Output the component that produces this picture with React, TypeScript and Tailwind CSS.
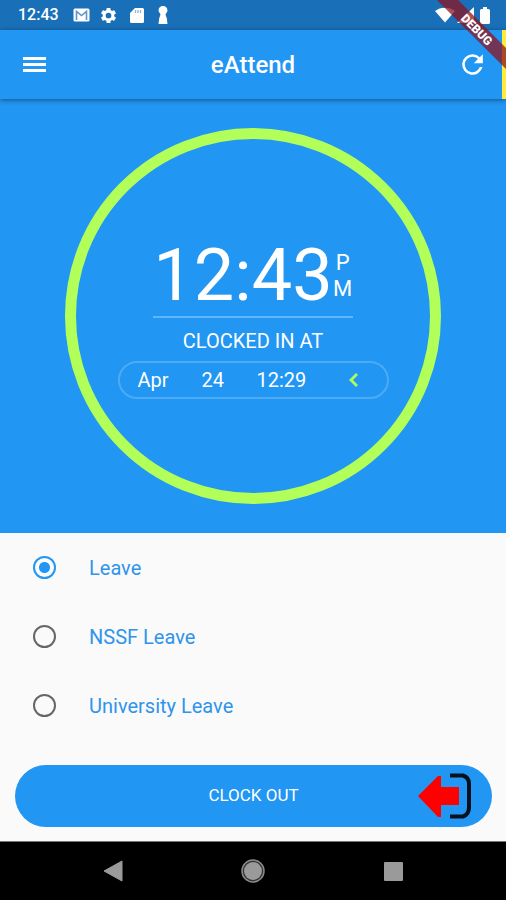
import { useState } from "react";

function StatusBar() {
  return (
    <div className="flex h-[30px] items-center justify-between bg-[#1a70b8] pr-4 pl-[18px] text-white">
      <div className="flex items-center">
        <span className="w-[55px] text-base leading-5 font-medium">12:43</span>
        <svg width="17" height="14" viewBox="0 0 17 14" aria-hidden="true">
          <rect x="0.5" y="0.5" width="16" height="13" rx="1.5" fill="#fff" />
          <path d="M3.5 12V3.5l5 4 5-4V12" fill="none" stroke="#5f95c8" strokeWidth="1.6" />
        </svg>
        <svg className="ml-[9px]" width="19" height="19" viewBox="0 0 24 24" fill="#fff" aria-hidden="true">
          <path d="M19.14 12.94c.04-.3.06-.61.06-.94 0-.32-.02-.64-.07-.94l2.03-1.58a.49.49 0 0 0 .12-.61l-1.92-3.32a.49.49 0 0 0-.59-.22l-2.39.96c-.5-.38-1.03-.7-1.62-.94l-.36-2.54a.48.48 0 0 0-.48-.41h-3.84a.48.48 0 0 0-.47.41l-.36 2.54c-.59.24-1.13.57-1.62.94l-2.39-.96a.48.48 0 0 0-.59.22L2.74 8.87a.48.48 0 0 0 .12.61l2.03 1.58c-.05.3-.09.63-.09.94s.02.64.07.94l-2.03 1.58a.49.49 0 0 0-.12.61l1.92 3.32c.12.22.37.29.59.22l2.39-.96c.5.38 1.03.7 1.62.94l.36 2.54c.05.24.24.41.48.41h3.84c.24 0 .44-.17.47-.41l.36-2.54c.59-.24 1.13-.56 1.62-.94l2.39.96c.22.08.47 0 .59-.22l1.92-3.32a.48.48 0 0 0-.12-.61l-2.01-1.58zM12 15.6A3.6 3.6 0 1 1 12 8.4a3.6 3.6 0 0 1 0 7.2z" />
        </svg>
        <svg className="ml-3" width="14" height="17" viewBox="0 0 14 17" aria-hidden="true">
          <path d="M5 1h7.500A1.500 1.500 0 0 1 14 2.500V14.500A1.500 1.500 0 0 1 12.500 16h-11A1.500 1.500 0 0 1 0 14.500V6z" fill="#fff" />
          <path d="M5.500 3v3M8 3v3M10.500 3v3" stroke="#8db6d8" strokeWidth="1.300" />
        </svg>
        <svg className="ml-[13px]" width="12" height="18" viewBox="0 0 12 18" fill="#fff" aria-hidden="true">
          <path d="M4.500 0h3L10 2l.5 3L8.500 8.500 10 13v1l.5 4h-9L2 14v-1l1.500-4.500L1.500 5 2 2z" />
        </svg>
      </div>
      <div className="flex items-center">
        <svg width="20" height="16" viewBox="0 0 20 16" fill="#fff" aria-hidden="true">
          <path d="M0 4C5-.5 15-.5 20 4L10 15.500z" />
        </svg>
        <svg className="ml-0.5" width="17" height="16" viewBox="0 0 17 16" fill="#fff" aria-hidden="true">
          <path d="M17 0v16H0z" />
        </svg>
        <svg className="ml-[6px]" width="10" height="17" viewBox="0 0 10 17" fill="#fff" aria-hidden="true">
          <path d="M3 0h4v2h1.500A1.500 1.500 0 0 1 10 3.500v12A1.500 1.500 0 0 1 8.500 17h-7A1.500 1.500 0 0 1 0 15.500v-12A1.500 1.500 0 0 1 1.500 2H3z" />
        </svg>
      </div>
    </div>
  );
}

function AppBar() {
  return (
    <header className="relative flex h-[69px] items-center justify-between border-r-4 border-[#ffeb3b] bg-[#2196f3] pr-[15px] pl-[23px] text-white shadow-[0_1px_5px_rgba(0,0,0,0.45)]">
      <button type="button" aria-label="Menu" className="flex size-6 items-center justify-center">
        <svg width="24" height="18" viewBox="0 0 24 18" fill="#fff" aria-hidden="true">
          <path d="M0 1h23v3H0zM0 7h23v3H0zM0 13h23v3H0z" />
        </svg>
      </button>
      <h1 className="text-2xl font-medium">eAttend</h1>
      <button type="button" aria-label="Refresh" className="flex size-7 items-center justify-center">
        <svg className="shrink-0" width="31" height="31" viewBox="0 0 24 24" fill="#fff" aria-hidden="true">
          <path d="M17.650 6.350A7.960 7.960 0 0 0 12 4a8 8 0 1 0 7.730 10h-2.080A6 6 0 1 1 12 6c1.660 0 3.140.69 4.220 1.780L13 11h7V4z" />
        </svg>
      </button>
    </header>
  );
}

function ClockPanel() {
  return (
    <section className="flex justify-center bg-[#2196f3] pt-[29px] pb-[29px] text-white">
      <div className="flex size-[376px] flex-col items-center rounded-full border-[11px] border-[#b2ff59] pt-[99px]">
        <div className="flex items-center border-b-2 border-white/30 pb-0.5">
          <time className="text-[72px] leading-[76px]">12:43</time>
          <span className="flex w-5 flex-col items-center text-[22px] leading-[26px]">
            <span>P</span>
            <span>M</span>
          </span>
        </div>
        <p className="mt-[11px] text-xl leading-6">CLOCKED IN AT</p>
        <div className="mt-2 flex h-[38px] w-[271px] items-center rounded-full border-2 border-white/20 pr-7 pl-[18px] text-xl leading-6">
          <span className="w-16">Apr</span>
          <span className="w-[55px]">24</span>
          <span>12:29</span>
          <svg className="ml-auto" width="12" height="16" viewBox="0 0 12 16" aria-hidden="true">
            <path d="M10 2L4 8l6 6" fill="none" stroke="#b2ff59" strokeWidth="2.800" />
          </svg>
        </div>
      </div>
    </section>
  );
}

const leaveTypes = ["Leave", "NSSF Leave", "University Leave"];

function LeaveOptions() {
  const [selected, setSelected] = useState("Leave");
  return (
    <div role="radiogroup" aria-label="Leave type" className="pb-[25px]">
      {leaveTypes.map((name) => (
        <label key={name} className="flex h-[69px] items-center gap-[33px] pl-[33px] text-xl text-[#2f94ea]">
          <input
            type="radio"
            name="leave"
            checked={selected === name}
            onChange={() => setSelected(name)}
            className="size-[23px] appearance-none rounded-full border-2 border-[#666] checked:border-[#2196f3] checked:bg-[radial-gradient(circle,#2196f3_5px,transparent_6px)]"
          />
          {name}
        </label>
      ))}
    </div>
  );
}

function ClockOutButton() {
  return (
    <button
      type="button"
      className="relative mr-[14px] mb-[14px] ml-[15px] flex h-[62px] items-center justify-center rounded-full bg-[#2196f3] text-[17px] text-white"
    >
      CLOCK OUT
      <svg className="absolute right-5" width="55" height="46" viewBox="0 0 55 46" aria-hidden="true">
        <path d="M33 2.500h13q6 2 6 8v24q0 7-6 9H33" fill="none" stroke="#07111c" strokeWidth="4" />
        <path d="M1 23L21 3h3v11h18v18H24v12h-3z" fill="#f00" />
      </svg>
    </button>
  );
}

function NavigationBar() {
  return (
    <nav className="grid h-[59px] grid-cols-3 items-center border-t border-[#777] bg-black px-[43px]">
      <button type="button" aria-label="Back" className="flex justify-center">
        <svg width="20" height="22" viewBox="0 0 20 22" fill="#9a9a9a" aria-hidden="true">
          <path d="M19 1v20L1 11z" stroke="#9a9a9a" strokeLinejoin="round" />
        </svg>
      </button>
      <button type="button" aria-label="Home" className="flex justify-center">
        <svg width="24" height="24" viewBox="0 0 24 24" aria-hidden="true">
          <circle cx="12" cy="12" r="11" fill="#333" stroke="#8a8a8a" strokeWidth="1.500" />
          <circle cx="12" cy="12" r="9" fill="#9a9a9a" />
        </svg>
      </button>
      <button type="button" aria-label="Recent apps" className="flex justify-center">
        <span className="size-[19px] rounded-[1px] bg-[#9a9a9a]" />
      </button>
    </nav>
  );
}

export default function App() {
  return (
    <div className="relative flex min-h-screen flex-col overflow-hidden bg-[#fafafa] font-['Roboto',sans-serif]">
      <StatusBar />
      <AppBar />
      <ClockPanel />
      <main className="flex grow flex-col">
        <LeaveOptions />
        <ClockOutButton />
      </main>
      <NavigationBar />
      <div className="absolute top-[22px] right-[-21px] flex h-[15px] w-[100px] rotate-45 items-center justify-center bg-[#8c1420]/75 text-xs leading-none font-black text-white">
        DEBUG
      </div>
    </div>
  );
}
